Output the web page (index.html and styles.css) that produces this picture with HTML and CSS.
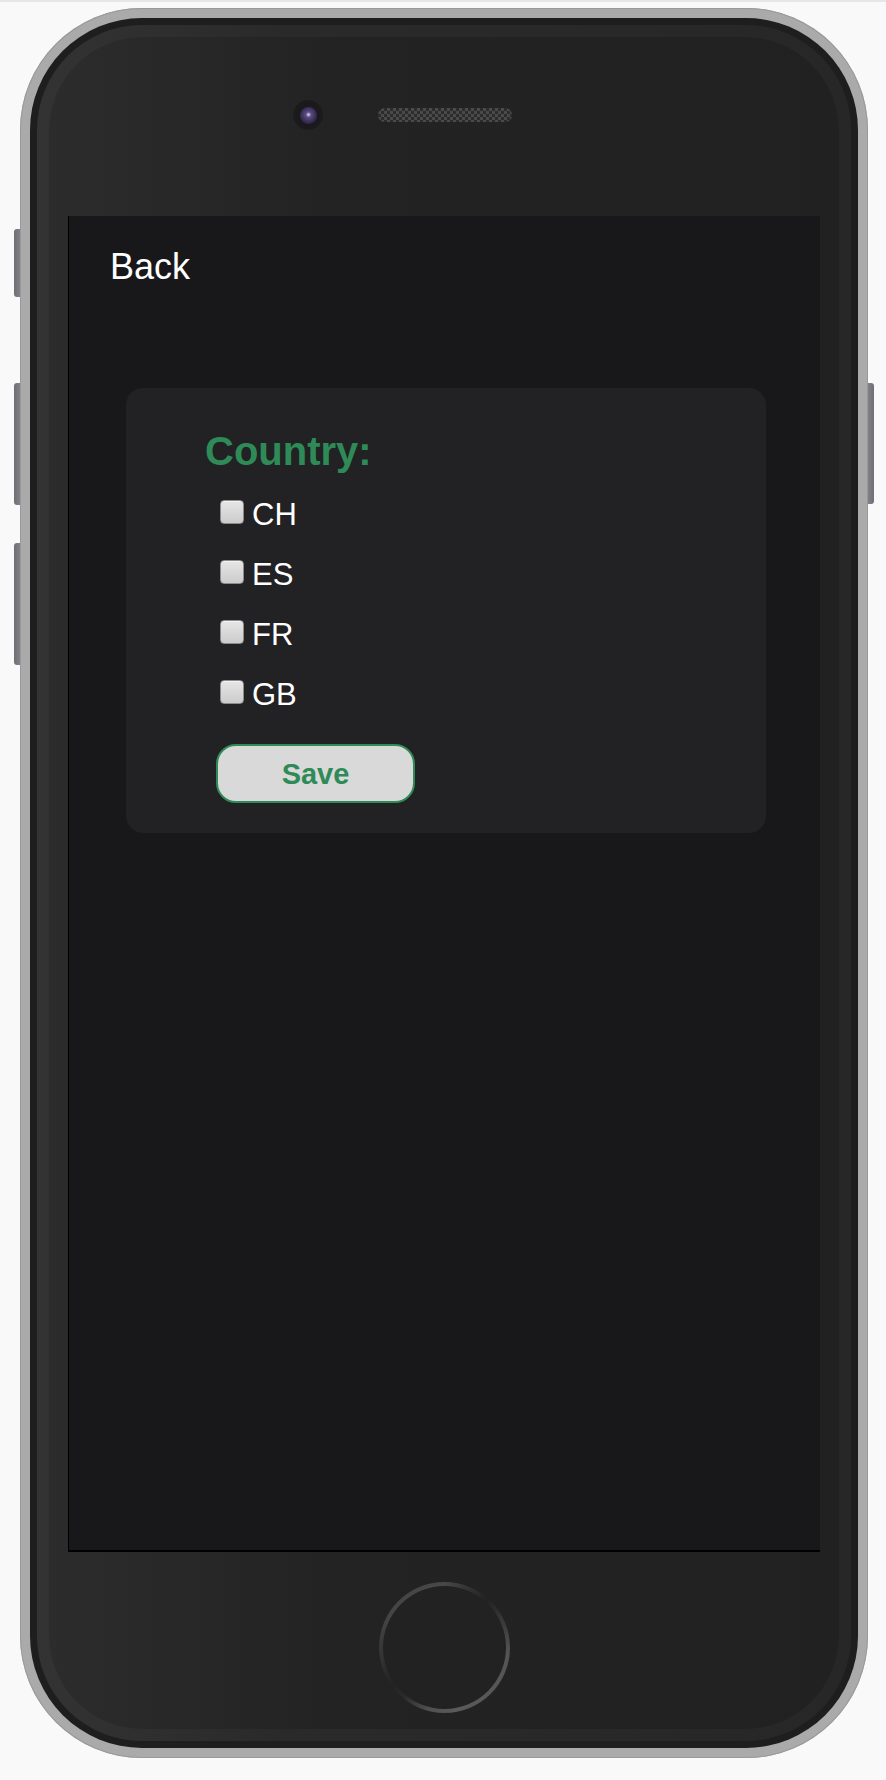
FILE: index.html
```html
<!DOCTYPE html>
<html lang="en">
<head>
<meta charset="utf-8">
<title>Country</title>
<link rel="stylesheet" href="styles.css">
</head>
<body>
<div class="topbar"></div>
<div class="device">
  <div class="side side-left">
    <span class="key key-mute"></span>
    <span class="key key-vol1"></span>
    <span class="key key-vol2"></span>
  </div>
  <div class="phone">
    <div class="body">
      <div class="bezel">
        <div class="face">
          <div class="sensors">
            <span class="camera"><span class="lens"></span></span>
            <span class="speaker"></span>
          </div>
          <div class="screen">
            <a class="back">Back</a>
            <form class="card">
              <h2 class="title">Country:</h2>
              <label class="option"><input type="checkbox" class="check"><span>CH</span></label>
              <label class="option"><input type="checkbox" class="check"><span>ES</span></label>
              <label class="option"><input type="checkbox" class="check"><span>FR</span></label>
              <label class="option"><input type="checkbox" class="check"><span>GB</span></label>
              <button type="button" class="save">Save</button>
            </form>
          </div>
          <div class="home"><div class="home-inner"></div></div>
        </div>
      </div>
    </div>
  </div>
  <div class="side side-right">
    <span class="key key-power"></span>
  </div>
</div>
</body>
</html>
```

FILE: styles.css
```css
html, body {
  margin: 0;
  padding: 0;
}
body {
  background: #f9f9f9;
  width: 886px;
  height: 1780px;
  font-family: "Liberation Sans", Arial, sans-serif;
  overflow: hidden;
}
.topbar {
  height: 2px;
  background: #e6e6e6;
}
.device {
  display: flex;
  align-items: flex-start;
  margin: 6px 0 0 14px;
}
.side {
  width: 6px;
  display: flex;
  flex-direction: column;
}
.key {
  display: block;
  width: 6px;
  background: linear-gradient(90deg, #6f6f75, #808086);
}
.side-left .key {
  border-radius: 3px 0 0 3px;
}
.side-right .key {
  border-radius: 0 3px 3px 0;
  background: linear-gradient(90deg, #808086, #6f6f75);
}
.key-mute { margin-top: 221px; height: 68px; }
.key-vol1 { margin-top: 86px; height: 122px; }
.key-vol2 { margin-top: 38px; height: 122px; }
.key-power { margin-top: 375px; height: 121px; }

.phone {
  width: 848px;
  height: 1750px;
  box-sizing: border-box;
  padding: 10px;
  border-radius: 122px;
  background: #aaaaaa;
  box-shadow: inset 0 0 0 1px #999;
}
.body {
  height: 100%;
  box-sizing: border-box;
  padding: 7px;
  border-radius: 112px;
  background: #1e1e1e;
}
.bezel {
  height: 100%;
  box-sizing: border-box;
  padding: 12px;
  border-radius: 105px;
  background: linear-gradient(90deg, #333 0%, #2a2a2a 30%, #272727 100%);
}
.face {
  height: 100%;
  box-sizing: border-box;
  border-radius: 94px;
  background: linear-gradient(90deg, #2c2c2c 0%, #232323 35%, #212121 100%);
  display: flex;
  flex-direction: column;
}
.sensors {
  display: flex;
  align-items: center;
  margin-top: 63px;
  padding-left: 244px;
  height: 30px;
}
.camera {
  width: 30px;
  height: 30px;
  border-radius: 50%;
  background: radial-gradient(circle, #1a1a1c 55%, #1f1f1f 100%);
  display: flex;
  align-items: center;
  justify-content: center;
}
.lens {
  width: 17px;
  height: 17px;
  border-radius: 50%;
  background: radial-gradient(circle at 50% 45%, #b8b0d0 0 8%, #5c4d86 20%, #3b3058 55%, #1e1a2a 100%);
}
.speaker {
  margin-left: 55px;
  width: 134px;
  height: 14px;
  border-radius: 7px;
  background: repeating-conic-gradient(#4a4a4a 0 25%, #2c2c2c 0 50%) 0 0 / 6px 6px;
}
.screen {
  margin: 86px 0 0 19px;
  width: 752px;
  height: 1336px;
  box-sizing: border-box;
  background: #18181a;
  border-left: 1px solid #000;
  border-bottom: 2px solid #000;
  display: flex;
  flex-direction: column;
  align-items: flex-start;
}
.back {
  display: block;
  margin: 31px 0 0 41px;
  font-size: 36px;
  line-height: 40px;
  color: #fff;
}
.card {
  margin: 101px 0 0 57px;
  width: 640px;
  box-sizing: border-box;
  padding: 41px 0 30px 79px;
  background: #222124;
  border-radius: 17px;
  display: flex;
  flex-direction: column;
  align-items: flex-start;
}
.title {
  margin: 0;
  font-size: 40px;
  line-height: 44px;
  font-weight: bold;
  color: #2e8b57;
}
.option {
  display: flex;
  align-items: flex-start;
  height: 34px;
  margin-top: 26px;
  font-size: 31px;
  line-height: 34px;
  color: #fff;
}
.title + .option {
  margin-top: 25px;
}
.check {
  appearance: none;
  -webkit-appearance: none;
  margin: 2px 8px 0 15px;
  width: 24px;
  height: 24px;
  box-sizing: border-box;
  border: 1px solid #8c8c8c;
  border-radius: 4px;
  background: linear-gradient(180deg, #e6e6e6 0%, #d6d6d6 60%, #cccccc 100%);
  box-shadow: inset 0 1px 0 #f2f2f2;
}
.save {
  margin: 32px 0 0 11px;
  width: 199px;
  height: 59px;
  box-sizing: border-box;
  border: 2px solid #2e8b57;
  border-radius: 20px;
  background: #d9d9d9;
  color: #2e8b57;
  font-family: "Liberation Sans", Arial, sans-serif;
  font-size: 29px;
  font-weight: bold;
  padding: 2px 0 0;
}
.home {
  margin: 30px auto 0;
  width: 131px;
  height: 131px;
  box-sizing: border-box;
  padding: 4px;
  border-radius: 50%;
  background: conic-gradient(from 0deg, #484848 0deg, #2c2c2c 30deg, #222 42deg, #333 60deg, #545454 95deg, #5a5a5a 170deg, #505050 195deg, #2a2a2a 220deg, #232323 235deg, #333 260deg, #454545 300deg, #484848 360deg);
}
.home-inner {
  width: 100%;
  height: 100%;
  border-radius: 50%;
  background: #222;
}
```
